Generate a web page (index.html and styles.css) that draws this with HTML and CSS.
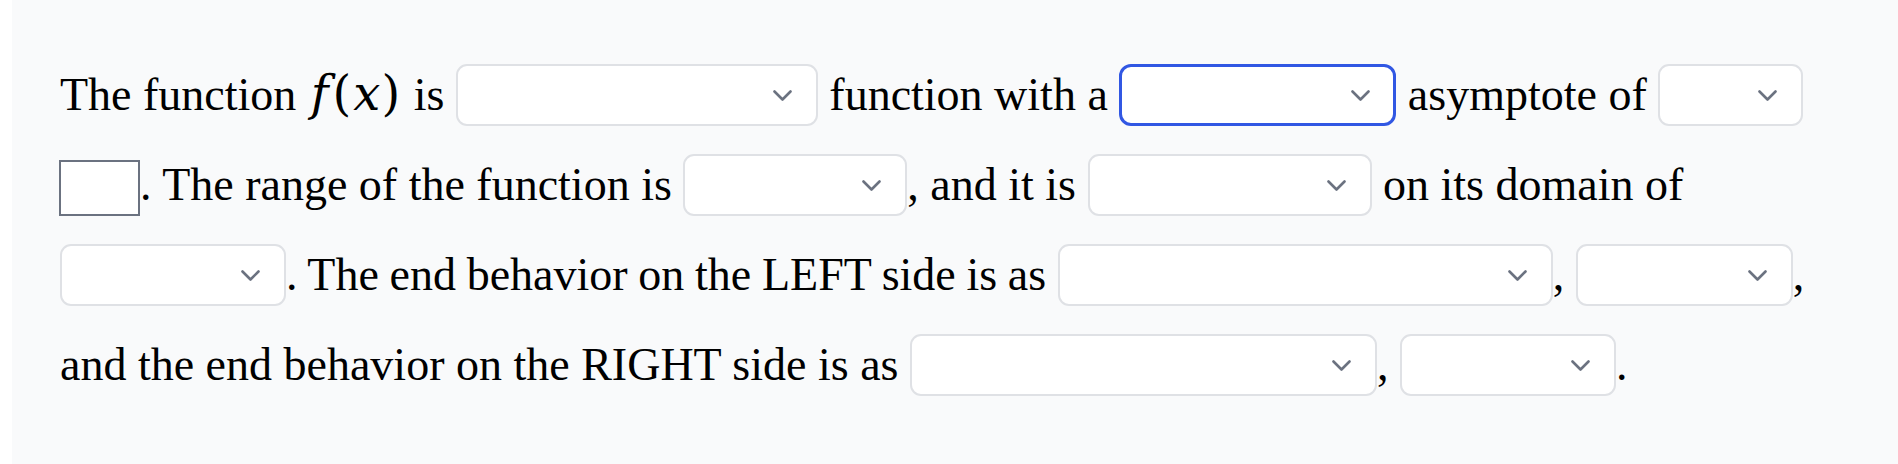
FILE: index.html
```html
<!DOCTYPE html>
<html lang="en">
<head>
<meta charset="utf-8">
<title>Function description</title>
<link rel="stylesheet" href="styles.css">
</head>
<body>
<main class="panel">
<p class="question">The function <span class="math"><i class="mi mi-f">f</i><span class="mo">(</span><i class="mi mi-x">x</i><span class="mo">)</span></span> is <span class="sel w362"><span class="sel-in"><svg class="chev" viewBox="0 0 19 11"><path d="M1.5 1.5 L9.5 9.5 L17.5 1.5"/></svg></span></span> function with a <span class="sel sel-focus w277"><span class="sel-in"><svg class="chev" viewBox="0 0 19 11"><path d="M1.5 1.5 L9.5 9.5 L17.5 1.5"/></svg></span></span> asymptote of <span class="sel w145"><span class="sel-in"><svg class="chev" viewBox="0 0 19 11"><path d="M1.5 1.5 L9.5 9.5 L17.5 1.5"/></svg></span></span> <span class="blank"></span>. The range of the function is <span class="sel w224"><span class="sel-in"><svg class="chev" viewBox="0 0 19 11"><path d="M1.5 1.5 L9.5 9.5 L17.5 1.5"/></svg></span></span>, and it is <span class="sel w284"><span class="sel-in"><svg class="chev" viewBox="0 0 19 11"><path d="M1.5 1.5 L9.5 9.5 L17.5 1.5"/></svg></span></span> on its domain of <span class="sel w226"><span class="sel-in"><svg class="chev" viewBox="0 0 19 11"><path d="M1.5 1.5 L9.5 9.5 L17.5 1.5"/></svg></span></span><span class="tight">. The end behavior on the LEFT side is as</span> <span class="sel w495"><span class="sel-in"><svg class="chev" viewBox="0 0 19 11"><path d="M1.5 1.5 L9.5 9.5 L17.5 1.5"/></svg></span></span>, <span class="sel w217"><span class="sel-in"><svg class="chev" viewBox="0 0 19 11"><path d="M1.5 1.5 L9.5 9.5 L17.5 1.5"/></svg></span></span>, and the end behavior on the RIGHT side is as <span class="sel w467"><span class="sel-in"><svg class="chev" viewBox="0 0 19 11"><path d="M1.5 1.5 L9.5 9.5 L17.5 1.5"/></svg></span></span>, <span class="sel w216"><span class="sel-in"><svg class="chev" viewBox="0 0 19 11"><path d="M1.5 1.5 L9.5 9.5 L17.5 1.5"/></svg></span></span>.</p>
</main>
</body>
</html>
```

FILE: styles.css
```css
html, body {
  margin: 0;
  padding: 0;
  background: #ffffff;
}

.panel {
  display: block;
  margin-left: 12px;
  min-height: 464px;
  background: #f9fafb;
  box-sizing: border-box;
  padding: 50px 48px 0 48px;
}

.question {
  margin: 0;
  font-family: "Liberation Serif", "Times New Roman", serif;
  font-size: 46px;
  line-height: 90px;
  color: #000000;
}

.tight {
  word-spacing: -0.8px;
}

.math {
  font-family: "DejaVu Serif", "Liberation Serif", serif;
  font-size: 48px;
  line-height: 1;
  margin-left: 3px;
  margin-right: 2px;
}

.mi {
  font-family: "DejaVu Serif", "Liberation Serif", serif;
  font-style: italic;
}

.mo {
  font-style: normal;
}

.mi-f {
  margin-right: 4px;
}

.mi-x {
  margin-left: 2px;
  margin-right: 1px;
}

.sel {
  display: inline-block;
  box-sizing: border-box;
  height: 62px;
  overflow: hidden;
  vertical-align: -16px;
  background: #ffffff;
  border: 2px solid #dfe1e5;
  border-radius: 11px;
}

.sel-focus {
  border: 3px solid #3157e3;
  border-radius: 12px;
}

.sel-in {
  display: flex;
  height: 100%;
  align-items: center;
  justify-content: flex-end;
  padding-right: 24px;
}

.sel-focus .sel-in {
  padding-right: 23px;
}

.chev {
  display: block;
  width: 19px;
  height: 11px;
  fill: none;
  stroke: #6b7280;
  stroke-width: 2.6;
  stroke-linecap: round;
  stroke-linejoin: round;
}

.blank {
  display: inline-block;
  box-sizing: border-box;
  width: 81px;
  height: 56px;
  overflow: hidden;
  vertical-align: -16px;
  background: #ffffff;
  border: 2px solid #6b7280;
  margin-left: -1px;
}

.w145 { width: 145px; }
.w216 { width: 216px; }
.w217 { width: 217px; }
.w224 { width: 224px; }
.w226 { width: 226px; }
.w277 { width: 277px; }
.w284 { width: 284px; }
.w362 { width: 362px; }
.w467 { width: 467px; }
.w495 { width: 495px; }
```
